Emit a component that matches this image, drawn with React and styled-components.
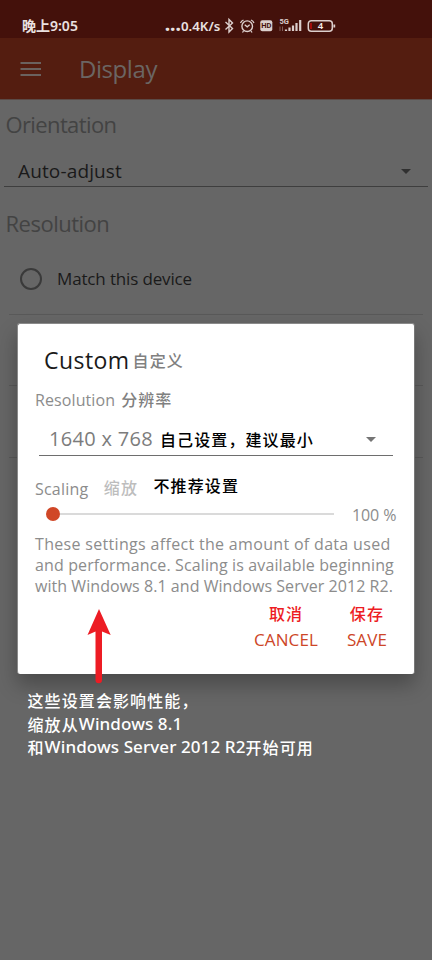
import React from 'react';
import styled, { createGlobalStyle } from 'styled-components';

const Global = createGlobalStyle`
  * { box-sizing: border-box; }
  body { margin: 0; background: #666; }
`;

const Screen = styled.div`
  position: relative;
  width: 432px;
  height: 960px;
  overflow: hidden;
  background: #666;
  font-family: 'Open Sans', 'Noto Sans CJK SC', sans-serif;
`;

const Label = styled.span`
  display: block;
  white-space: nowrap;
  font-family: 'Open Sans', 'Noto Sans CJK SC', sans-serif;
  font-weight: 400;
  font-size: ${p => p.$size}px;
  line-height: ${p => p.$line || 24}px;
  letter-spacing: ${p => p.$track || 0}px;
  margin-top: ${p => p.$shift || 0}px;
  color: ${p => p.$color || '#1a1a1a'};
`;

const Note = styled.span`
  display: block;
  white-space: nowrap;
  font-family: 'Noto Sans CJK SC', sans-serif;
  font-weight: 500;
  font-size: 16px;
  line-height: 24px;
  letter-spacing: 1.1px;
  margin-top: ${p => p.$shift || 0}px;
  color: ${p => p.$color || '#000'};
`;

const StatusBar = styled.header`
  display: flex;
  align-items: center;
  height: 38px;
  padding: 14px 0 0 22px;
  background: #44110b;
`;

const StatusText = styled.span`
  display: flex;
  width: ${p => p.$width}px;
  white-space: nowrap;
  color: #eae1e0;
  font: 600 ${p => p.$size}px/24px 'Noto Sans', 'Noto Sans CJK SC', sans-serif;
`;

const Dots = styled.b`
  font-size: 17px;
  line-height: 21px;
  letter-spacing: 0.4px;
`;

const StatusIcons = styled.svg`
  display: block;
  width: 115px;
  height: 20px;
`;

const AppBar = styled.nav`
  display: flex;
  align-items: center;
  height: 62px;
  padding-left: 20px;
  gap: 37px;
  background: #541d10;
  border-bottom: 1px solid #5b4a46;
`;

const MenuIcon = styled.svg`
  display: block;
  width: 22px;
  height: 16px;
`;

const Settings = styled.main`
  display: flex;
  flex-direction: column;
`;

const SectionTitle = styled(Label)`
  height: ${p => p.$height}px;
  padding: 12px 0 0 5.5px;
`;

const Select = styled.div`
  display: flex;
  align-items: center;
  justify-content: space-between;
  height: 38px;
  margin: ${p => p.$margin};
  padding: ${p => p.$padding};
  border-bottom: ${p => p.$border};
`;

const Caret = styled.i`
  border: solid transparent;
  border-width: 5.5px 5.5px 0;
  border-top-color: ${p => p.$color};
`;

const Option = styled.div`
  display: flex;
  align-items: center;
  gap: 15px;
  height: ${p => p.$height}px;
  margin: 0 9px;
  padding-left: 11px;
  border-bottom: 1px solid #595959;
`;

const Radio = styled.i`
  width: 22px;
  height: 22px;
  border: 2px solid #3a3a3a;
  border-radius: 50%;
`;

const Overlay = styled.div`
  position: absolute;
  inset: 323px 17px auto 17px;
`;

const Dialog = styled.section`
  height: 351px;
  padding: 24px 0 0 17px;
  background: #fff;
  border: 1px solid #8a8a8a;
  border-right-color: #777;
  border-bottom: 0;
  border-radius: 3px;
  box-shadow: 0 11px 20px rgba(0, 0, 0, 0.28);
`;

const Row = styled.div`
  display: flex;
  height: ${p => p.$height}px;
  padding-left: ${p => p.$left || 0}px;
  gap: ${p => p.$gap || 0}px;
`;

const ScalingRow = styled(Row)`
  justify-content: space-between;
  width: 204px;
`;

const SliderRow = styled.div`
  display: flex;
  align-items: center;
  height: 26px;
  padding-left: 11px;
`;

const Thumb = styled.i`
  width: 14px;
  height: 14px;
  border-radius: 50%;
  background: #d04727;
`;

const Track = styled.i`
  width: 274px;
  height: 2px;
  margin-right: 18px;
  background: #dadada;
`;

const Description = styled.div`
  margin-top: 7px;
`;

const Actions = styled.div`
  display: flex;
  justify-content: flex-end;
  gap: 29px;
  margin-top: 4px;
  padding-right: 27px;
`;

const Action = styled.button`
  display: flex;
  flex-direction: column;
  align-items: center;
  padding: 0;
  border: 0;
  background: none;
`;

const Annotation = styled.div`
  margin: 14.5px 0 0 10.5px;
`;

const AnnotationLine = styled.p`
  margin: 0;
  height: 23.5px;
  display: flex;
  align-items: center;
  white-space: nowrap;
  color: #fff;
  font: 500 17px/24px 'Noto Sans', 'Noto Sans CJK SC', sans-serif;
  letter-spacing: 0.1px;
`;

const Han = styled.span`
  font-family: 'Noto Sans CJK SC', sans-serif;
  font-size: 16px;
  letter-spacing: 1.1px;
`;

const Arrow = styled.svg`
  position: absolute;
  left: 69px;
  top: 285px;
  width: 26px;
  height: 78px;
`;

function SystemIcons() {
  return (
    <StatusIcons viewBox="0 0 115 20" fill="none" stroke="#dccfcd">
      <path d="M1.500 6l7 6.500-3.500 3.500v-12.500L8.500 7l-7 6.500" strokeWidth="1.400" />
      <circle cx="23.200" cy="10.200" r="5.300" strokeWidth="1.400" />
      <path d="M16.500 7a6 6 0 0 1 3-3M30 7a6 6 0 0 0-3-3M20.700 8.800l2.500 2 2.500-2M19.500 15l-1 1.500M27 15l1 1.500" strokeWidth="1.300" />
      <rect x="36.300" y="4.200" width="12" height="11" rx="2" fill="#dccfcd" stroke="none" />
      <text x="42.300" y="12.400" textAnchor="middle" fontFamily="Roboto, sans-serif" fontSize="7.500" fontWeight="700" fill="#44110b" stroke="none">HD</text>
      <text x="55.500" y="8.200" fontFamily="Roboto, sans-serif" fontSize="7.500" fontWeight="700" fill="#dccfcd" stroke="none">5G</text>
      <path d="M56 10.500v4.500M58.500 15v-4.500" strokeWidth="1" opacity=".4" />
      <path d="M62 15v-1.500M65.500 15v-3.500M69 15v-5.500M72.500 15v-8M76.200 15v-11" strokeWidth="2.200" />
      <rect x="84.300" y="4.700" width="24" height="10.600" rx="3" strokeWidth="1.500" />
      <path d="M87 7v6" stroke="#c20d0d" strokeWidth="1.500" />
      <path d="M110.300 8.500v3" strokeWidth="1.800" />
      <text x="96.500" y="13.400" textAnchor="middle" fontFamily="Noto Sans, sans-serif" fontSize="9.500" fontWeight="600" fill="#f4eeee" stroke="none">4</text>
    </StatusIcons>
  );
}

const Spacer = styled.div`
  height: ${p => p.$height}px;
`;

const muted = '#8c8c8c';

export default function App() {
  return (
    <>
      <Global />
      <Screen>
        <StatusBar>
          <StatusText $size={14} $width={143}>晚上9:05</StatusText>
          <StatusText $size={13.3} $width={59}><Dots>...</Dots>0.4K/s</StatusText>
          <SystemIcons />
        </StatusBar>
        <AppBar>
          <MenuIcon viewBox="0 0 22 16">
            <path d="M.5 2h20.500M.5 8h20.500M.5 14h20.500" stroke="#6b625f" strokeWidth="2" />
          </MenuIcon>
          <Label $size={24} $line={30} $shift={1} $track={-0.43} $color="#6b6563">Display</Label>
        </AppBar>
        <Settings>
          <SectionTitle $height={49} $size={22} $track={-0.62} $color="#434343">Orientation</SectionTitle>
          <Select $margin="0 4px" $padding="7px 17px 0 14px" $border="1px solid #3e3e3e">
            <Label $size={19} $track={0.14}>Auto-adjust</Label>
            <Caret $color="#303030" />
          </Select>
          <Spacer $height={12} />
          <SectionTitle $height={44} $size={22} $track={-0.5} $color="#434343">Resolution</SectionTitle>
          <Option $height={72}>
            <Radio />
            <Label $size={17} $track={-0.15}>Match this device</Label>
          </Option>
          <Option $height={71} />
          <Option $height={72} />
        </Settings>
        <Overlay>
          <Dialog>
            <Row $height={40} $left={9} $gap={3}>
              <Label $size={23} $track={0.45}>Custom</Label>
              <Note $color="#808080">自定义</Note>
            </Row>
            <Row $height={30} $gap={6}>
              <Label $size={16} $track={0.1} $color={muted}>Resolution</Label>
              <Note $shift={-1} $color="#808080">分辨率</Note>
            </Row>
            <Select $margin="0 21px 0 4px" $padding="5px 17px 0 10px" $border="1px solid #6e6e6e">
              <Row $height={24} $gap={7}>
                <Label $size={20} $track={0.31} $color="#7c7c7c">1640 x 768</Label>
                <Note>自己设置，建议最小</Note>
              </Row>
              <Caret $color="#757575" />
            </Select>
            <ScalingRow $height={45}>
              <Label $size={16} $shift={21} $track={0.2} $color={muted}>Scaling</Label>
              <Note $shift={19} $color="#bdbdbd">缩放</Note>
              <Note $shift={17}>不推荐设置</Note>
            </ScalingRow>
            <SliderRow>
              <Thumb />
              <Track />
              <Label $size={16} $shift={1} $track={-0.1} $color={muted}>100 %</Label>
            </SliderRow>
            <Description>
              <Label $size={16} $line={21} $track={0.32} $color={muted}>These settings affect the amount of data used</Label>
              <Label $size={16} $line={21} $track={0.12} $color={muted}>and performance. Scaling is available beginning</Label>
              <Label $size={16} $line={21} $track={0.05} $color={muted}>with Windows 8.1 and Windows Server 2012 R2.</Label>
            </Description>
            <Actions>
              <Action>
                <Note $color="#ed1c24">取消</Note>
                <Label $size={17} $line={29} $track={0.1} $color="#cd4627">CANCEL</Label>
              </Action>
              <Action>
                <Note $color="#ed1c24">保存</Note>
                <Label $size={17} $line={29} $track={0.1} $color="#cd4627">SAVE</Label>
              </Action>
            </Actions>
          </Dialog>
          <Annotation>
            <AnnotationLine><Han>这些设置会影响性能，</Han></AnnotationLine>
            <AnnotationLine><Han>缩放从</Han>Windows 8.1</AnnotationLine>
            <AnnotationLine><Han>和</Han>Windows Server 2012 R2<Han>开始可用</Han></AnnotationLine>
          </Annotation>
          <Arrow viewBox="0 0 26 78">
            <path d="M13 1L24.700 27 16 23.500V72a3 3 0 0 1-6.500 0V23.500L1.500 27z" fill="#ed1c24" />
          </Arrow>
        </Overlay>
      </Screen>
    </>
  );
}
